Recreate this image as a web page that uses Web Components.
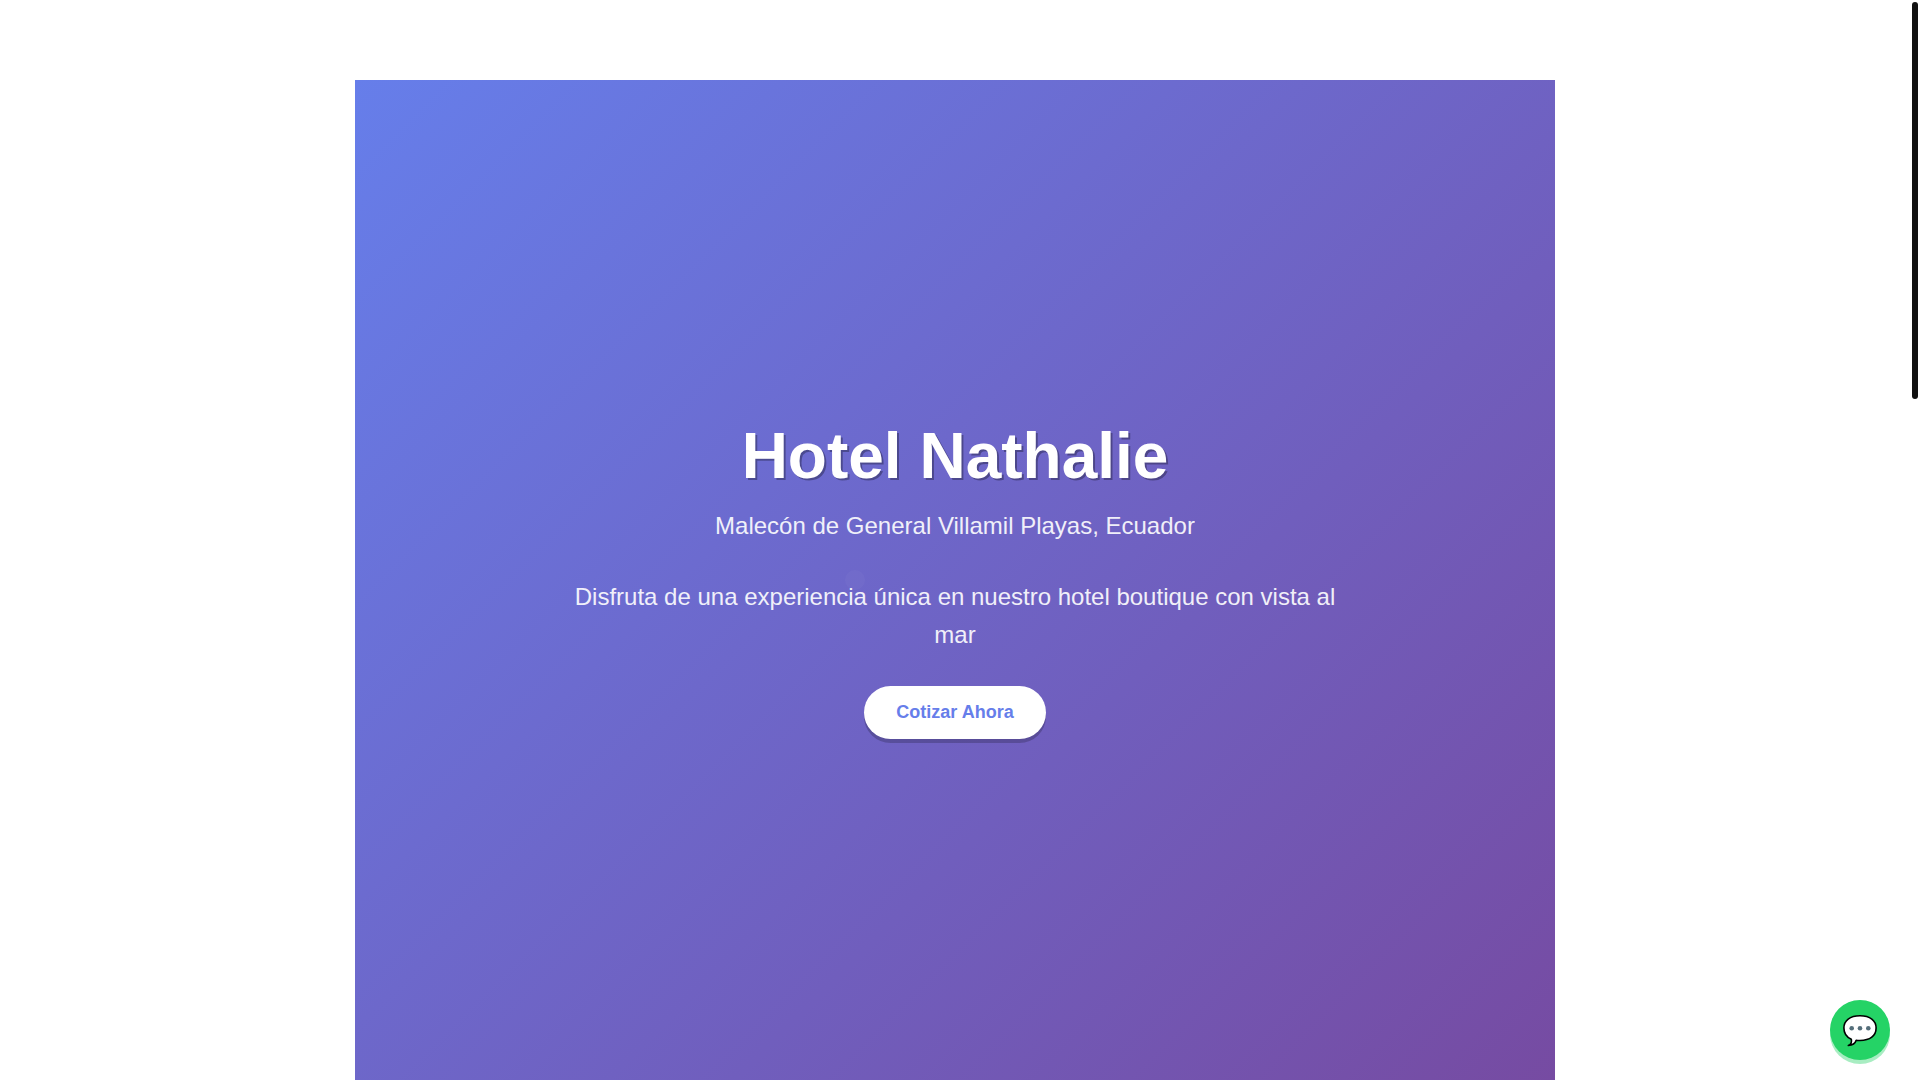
<!DOCTYPE html>
<html lang="es">
<head>
<meta charset="utf-8">
<meta name="viewport" content="width=device-width, initial-scale=1">
<title>Hotel Nathalie</title>
<style>
  body { margin: 0; background: #fff; font-family: Arial, "Liberation Sans", sans-serif; line-height: 1.6; }
</style>
</head>
<body>
<hotel-page>
  <hotel-hero>
    <span slot="title">Hotel Nathalie</span>
    <span slot="place">Malecón de General Villamil Playas, Ecuador</span>
    <span slot="text">Disfruta de una experiencia única en nuestro hotel boutique con vista al mar</span>
    <cta-button slot="action">Cotizar Ahora</cta-button>
  </hotel-hero>
</hotel-page>
<chat-button></chat-button>
<script>
const define = (name, html) => customElements.define(name, class extends HTMLElement {
  constructor() {
    super();
    this.attachShadow({ mode: "open" }).innerHTML = html;
  }
});

define("scroll-rail", `
<style>
  :host { display: block; width: 10px; height: 100vh; position: sticky; top: 0; box-sizing: border-box; padding: 2px; }
  div { height: 36.9%; background: #111; border-radius: 3px; }
</style>
<div></div>`);

define("hotel-page", `
<style>
  :host { display: flex; height: 100vh; }
  main { flex: 1; display: flex; justify-content: center; box-sizing: border-box; padding-top: 80px; }
</style>
<main><slot></slot></main>
<scroll-rail aria-hidden="true"></scroll-rail>`);

define("hotel-hero", `
<style>
  :host { display: flex; flex: 1; max-width: 1200px; align-items: center; justify-content: center; position: relative;
    background: linear-gradient(135deg, #667eea 0%, #764ba2 100%); color: #fff; text-align: center; }
  .bubble { position: absolute; left: calc(50% - 110px); top: calc(50% - 10px); width: 20px; height: 20px;
    border-radius: 50%; background: rgba(255,255,255,.03); }
  section { position: relative; display: flex; flex-direction: column; align-items: center; max-width: 800px; padding: 0 20px 5px; }
  h1 { margin: 0 0 12px; font-size: 64px; line-height: 78px; text-shadow: 2px 2px 0 rgba(0,0,0,.3); }
  p { margin: 0 0 32px; font-size: 24px; line-height: 38px; opacity: .9; }
  .place { margin-bottom: 33px; }
</style>
<div class="bubble"></div>
<section>
  <h1><slot name="title"></slot></h1>
  <p class="place"><slot name="place"></slot></p>
  <p><slot name="text"></slot></p>
  <slot name="action"></slot>
</section>`);

define("cta-button", `
<style>
  :host { display: block; }
  button { display: block; border: 0; border-radius: 50px; padding: 12px 32px; background: #fff; color: #667eea;
    font-family: inherit; font-size: 18px; font-weight: bold; line-height: 29px; box-shadow: 0 4px 0 rgba(0,0,0,.2); cursor: pointer; }
</style>
<button type="button"><slot></slot></button>`);

define("chat-button", `
<style>
  :host { display: block; position: fixed; right: 30px; bottom: 20px; }
  button { display: flex; align-items: center; justify-content: center; width: 60px; height: 60px; padding: 0; border: 0;
    border-radius: 50%; background: #25d366; box-shadow: 0 4px 0 rgba(37,211,102,.4); cursor: pointer; }
  svg { display: block; }
</style>
<button type="button" aria-label="Chat">
  <svg width="36" height="36" viewBox="0 0 36 36" aria-hidden="true">
    <path d="M18 3.800C8 3.800 1.900 8.500 1.900 16C1.900 21.500 4.800 25.300 9.300 27.200C10 30 9 32.300 6.300 33.400C10.500 33.300 13.200 31.500 14.200 28.300C15.400 28.500 16.600 28.500 18 28.500C28 28.500 34.100 23.800 34.100 16C34.100 8.500 28 3.800 18 3.800Z" fill="#fff" stroke="#000" stroke-width="1.600" stroke-linejoin="round"/>
    <g fill="#546e7a"><circle cx="9.700" cy="16.300" r="2.300"/><circle cx="18" cy="16.300" r="2.300"/><circle cx="26.300" cy="16.300" r="2.300"/></g>
  </svg>
</button>`);
</script>
</body>
</html>
